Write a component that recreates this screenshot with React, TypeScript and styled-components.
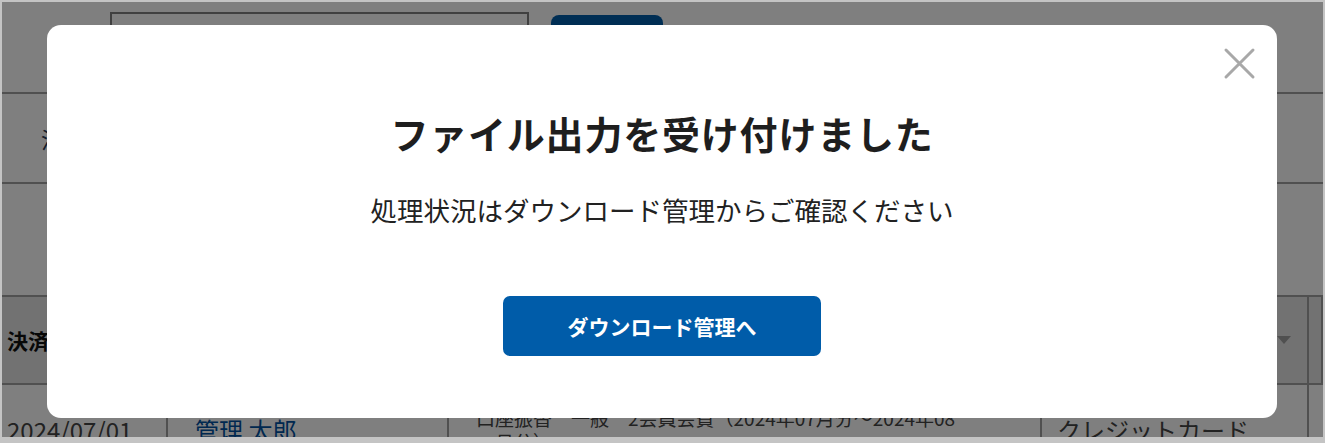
import React from "react";
import styled, { createGlobalStyle } from "styled-components";

const GlobalStyle = createGlobalStyle`
	html, body {
		margin: 0;
		padding: 0;
		background: #ffffff;
	}
	body {
		font-family: "Noto Sans CJK JP", "Noto Sans", sans-serif;
		color: #222222;
	}
`;

const Frame = styled.div`
	position: relative;
	width: 1325px;
	height: 443px;
	box-sizing: border-box;
	border-style: solid;
	border-color: #c4c4c4;
	border-width: 2px 2px 6px 2px;
	overflow: hidden;
	background: #ffffff;
`;

const Page = styled.div`
	display: flex;
	flex-direction: column;
	& > * {
		flex-shrink: 0;
	}
`;

const SearchBar = styled.div`
	display: flex;
	align-items: flex-start;
	gap: 22px;
	height: 92px;
	box-sizing: border-box;
	padding: 10px 0 0 108px;
	border-bottom: 2px solid #a0a0a0;
`;

const SearchInput = styled.div`
	width: 419px;
	height: 52px;
	box-sizing: border-box;
	border: 2px solid #808080;
	background: #ffffff;
`;

const SearchButton = styled.div`
	width: 112px;
	height: 48px;
	margin-top: 3px;
	border-radius: 8px;
	background: #005ca9;
`;

const FilterRow = styled.div<{ $height: number }>`
	display: flex;
	align-items: center;
	height: ${(p) => p.$height}px;
	box-sizing: border-box;
	padding-left: 39px;
	border-bottom: 2px solid #a0a0a0;
	font-size: 22px;
	color: #2a3a55;
`;

const Table = styled.div`
	display: grid;
	grid-template-columns: 166px 281px 593px 267px 1fr;
	grid-template-rows: 88px 90px;
`;

const HeadCell = styled.div<{ $end?: boolean }>`
	display: flex;
	align-items: center;
	justify-content: ${(p) => (p.$end ? "flex-end" : "flex-start")};
	box-sizing: border-box;
	padding: 0 ${(p) => (p.$end ? "16px" : "5px")};
	background: #e4e4e4;
	border-bottom: 2px solid #a0a0a0;
	border-right: 2px solid #a0a0a0;
	font-size: 21px;
	font-weight: 700;
	color: #111111;
	&:last-child {
		border-right: none;
	}
`;

const Caret = styled.span`
	width: 0;
	height: 0;
	border-left: 7px solid transparent;
	border-right: 7px solid transparent;
	border-top: 8px solid #a0a0a0;
`;

const Cell = styled.div<{ $pad: number; $small?: boolean }>`
	display: flex;
	align-items: center;
	box-sizing: border-box;
	padding: 0 5px 0 ${(p) => p.$pad}px;
	border-right: 2px solid #a0a0a0;
	font-size: ${(p) => (p.$small ? "19px" : "24px")};
	line-height: 1.25;
	color: #444444;
	&:last-child {
		border-right: none;
	}
`;

const NameLink = styled.a`
	color: #0050a0;
	text-decoration: underline;
`;

const Overlay = styled.div`
	position: absolute;
	inset: 0;
	display: flex;
	align-items: flex-start;
	justify-content: center;
	padding-top: 23px;
	background: rgba(0, 0, 0, 0.5);
`;

const Dialog = styled.div`
	position: relative;
	display: flex;
	flex-direction: column;
	align-items: center;
	width: 1230px;
	height: 393px;
	box-sizing: border-box;
	padding-top: 81px;
	margin-left: -1px;
	border-radius: 14px;
	background: #ffffff;
`;

const CloseButton = styled.button`
	position: absolute;
	top: 21px;
	right: 20px;
	width: 36px;
	height: 36px;
	padding: 0;
	border: none;
	background: none;
	cursor: pointer;
`;

const Title = styled.h2`
	margin: 0;
	font-size: 38px;
	line-height: 53px;
	font-weight: 700;
	letter-spacing: 0.8px;
	color: #1e1e1e;
`;

const Message = styled.p`
	margin: 31px 0 0 0;
	font-size: 26.5px;
	line-height: 39px;
	color: #222222;
`;

const PrimaryButton = styled.button`
	width: 318px;
	height: 60px;
	margin-top: 67px;
	border: none;
	border-radius: 7px;
	background: #005ca9;
	color: #ffffff;
	font-family: inherit;
	font-size: 21px;
	font-weight: 700;
	cursor: pointer;
`;

const App = () => {
	return (
		<>
			<GlobalStyle />
			<Frame>
				<Page>
					<SearchBar>
						<SearchInput />
						<SearchButton />
					</SearchBar>
					<FilterRow $height={90}>注文番号</FilterRow>
					<FilterRow $height={113} />
					<Table>
						<HeadCell>決済日</HeadCell>
						<HeadCell>担当者</HeadCell>
						<HeadCell>内容</HeadCell>
						<HeadCell $end>
							<Caret />
						</HeadCell>
						<HeadCell />
						<Cell $pad={5}>2024/07/01</Cell>
						<Cell $pad={27}>
							<NameLink href="#">管理 太郎</NameLink>
						</Cell>
						<Cell $pad={27} $small>
							口座振替　一般　2会員会費（2024年07月分〜2024年08
							<br />
							・月分）
						</Cell>
						<Cell $pad={15}>クレジットカード</Cell>
						<Cell $pad={5} />
					</Table>
				</Page>
				<Overlay>
					<Dialog role="dialog" aria-modal="true">
						<CloseButton aria-label="閉じる">
							<svg width="36" height="36" viewBox="0 0 36 36">
								<path
									d="M5 4 L32 31 M32 4 L5 31"
									stroke="#a8a8a8"
									strokeWidth="3"
									strokeLinecap="round"
								/>
							</svg>
						</CloseButton>
						<Title>ファイル出力を受け付けました</Title>
						<Message>処理状況はダウンロード管理からご確認ください</Message>
						<PrimaryButton>ダウンロード管理へ</PrimaryButton>
					</Dialog>
				</Overlay>
			</Frame>
		</>
	);
};

export default App;
